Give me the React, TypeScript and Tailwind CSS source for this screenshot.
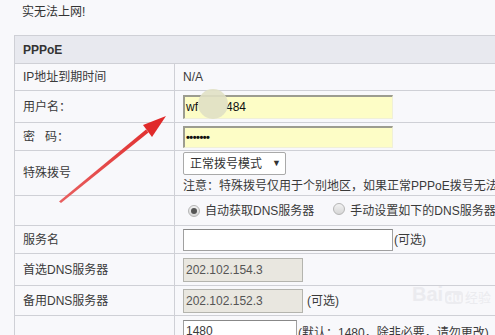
import React from 'react';

const font = { fontFamily: '"Liberation Sans", "Noto Sans CJK SC", sans-serif' };

const Label: React.FC<{ children?: React.ReactNode }> = ({ children }) => (
    <div className="w-[160px] shrink-0 border-r border-[#cfd0d6] pl-[8px] flex items-center">{children}</div>
);

const Radio: React.FC<{ checked?: boolean }> = ({ checked }) => (
    <span className="inline-flex items-center justify-center size-[12px] rounded-full border border-[#b5b5b5] bg-gradient-to-b from-[#f2f2f2] to-[#d6d6d6]">
        {checked && <span className="size-[6px] rounded-full bg-[#555]"></span>}
    </span>
);

export default function App() {
    return (
        <div className="relative w-[495px] h-[335px] overflow-hidden bg-[#f8f8fb] text-[12px] text-[#3a3a3a]" style={font}>
            {/* top message */}
            <div className="h-[35px] pl-[22px] pt-[4px] leading-[16px] text-[#333]">实无法上网!</div>

            {/* PPPoE settings table */}
            <div className="ml-[14px] w-[640px] border-t border-l border-[#cfd0d6]">
                <div className="h-[28px] border-b border-[#cfd0d6] bg-[#e8e9ef] pl-[8px] flex items-center font-bold text-[#333]">PPPoE</div>

                <div className="h-[27px] border-b border-[#cfd0d6] flex">
                    <Label>IP地址到期时间</Label>
                    <div className="pl-[8px] flex items-center">N/A</div>
                </div>

                <div className="h-[32px] border-b border-[#cfd0d6] flex">
                    <Label>用户名：</Label>
                    <div className="pl-[8px] flex items-center">
                        <div className="w-[210px] h-[24px] bg-[#fdfdc6] border-t-2 border-l-2 border-t-[#9c9c90] border-l-[#9c9c90] border-r border-b border-r-[#f0f0d8] border-b-[#f0f0d8] pl-[1px] flex items-center text-[#111]">wf<span className="w-[28px]"></span>484</div>
                    </div>
                </div>

                <div className="h-[28px] border-b border-[#cfd0d6] flex">
                    <Label>密&nbsp;&nbsp;&nbsp;码：</Label>
                    <div className="pl-[8px] flex items-center">
                        <div className="w-[210px] h-[22px] bg-[#fdfdc6] border-t-2 border-l-2 border-t-[#9c9c90] border-l-[#9c9c90] border-r border-b border-r-[#f0f0d8] border-b-[#f0f0d8] pl-[1px] flex items-center text-[#111] text-[11px] font-bold tracking-[-0.5px]">•••••••</div>
                    </div>
                </div>

                <div className="h-[45px] border-b border-[#cfd0d6] flex">
                    <Label>特殊拨号</Label>
                    <div className="pl-[8px] pt-[1px] flex flex-col whitespace-nowrap">
                        <div className="w-[103px] h-[23px] bg-white border border-[#a9a9a9] rounded-[2px] pl-[6px] flex items-center text-[#333]">
                            正常拨号模式<span className="ml-[10px] text-[9px]">▼</span>
                        </div>
                        <div className="mt-[3px] leading-[16px]">注意：特殊拨号仅用于个别地区，如果正常PPPoE拨号无法成功，请尝试</div>
                    </div>
                </div>

                <div className="h-[30px] border-b border-[#cfd0d6] flex">
                    <Label></Label>
                    <div className="pl-[13px] flex items-center gap-[5px] whitespace-nowrap">
                        <Radio checked />
                        <span>自动获取DNS服务器</span>
                        <span className="ml-[14px]"><Radio /></span>
                        <span>手动设置如下的DNS服务器</span>
                    </div>
                </div>

                <div className="h-[28px] border-b border-[#cfd0d6] flex">
                    <Label>服务名</Label>
                    <div className="pl-[8px] flex items-center">
                        <div className="w-[210px] h-[22px] bg-white border border-[#a0a0a0] border-t-[#888]"></div>
                        <span className="ml-[1px]">(可选)</span>
                    </div>
                </div>

                <div className="h-[32px] border-b border-[#cfd0d6] flex">
                    <Label>首选DNS服务器</Label>
                    <div className="pl-[8px] flex items-center">
                        <div className="w-[120px] h-[24px] bg-[#e9e7e0] border border-[#b4b4ae] pl-[2px] flex items-center text-[#555]">202.102.154.3</div>
                    </div>
                </div>

                <div className="h-[30px] border-b border-[#cfd0d6] flex">
                    <Label>备用DNS服务器</Label>
                    <div className="pl-[8px] flex items-center">
                        <div className="w-[120px] h-[24px] bg-[#e9e7e0] border border-[#b4b4ae] pl-[2px] flex items-center text-[#555]">202.102.152.3</div>
                        <span className="ml-[4px]">(可选)</span>
                    </div>
                </div>

                <div className="h-[30px] border-b border-[#cfd0d6] flex">
                    <Label></Label>
                    <div className="pl-[8px] pt-[4px] flex items-start whitespace-nowrap">
                        <div className="w-[114px] h-[22px] bg-white border border-[#a0a0a0] border-t-[#888] pl-[2px] flex items-center">1480</div>
                        <span className="ml-[1px] mt-[4px]">(默认：1480，除非必要，请勿更改)</span>
                    </div>
                </div>
            </div>

            {/* blur patch over username */}
            <div className="absolute left-[198px] top-[89px] size-[30px] rounded-full bg-[#e0e0c4] opacity-90"></div>

            {/* watermark */}
            <div className="absolute left-[412px] top-[284px] flex items-end gap-[2px] text-[#ebebef] pointer-events-none">
                <span className="text-[20px] font-bold leading-none" style={{ fontFamily: '"Liberation Sans", sans-serif' }}>Bai</span>
                <span className="text-[13px] font-bold leading-none bg-[#ececf0] text-[#f8f8fb] rounded-[4px] px-[1px]">du</span>
                <span className="text-[13px] leading-none">经验</span>
            </div>

            {/* red arrow */}
            <svg className="absolute left-0 top-0 pointer-events-none" width="495" height="335" viewBox="0 0 495 335">
                <defs>
                    <linearGradient id="arrowRed" x1="60" y1="202" x2="165" y2="117" gradientUnits="userSpaceOnUse">
                        <stop offset="0" stopColor="#e86060" />
                        <stop offset="1" stopColor="#e02a2a" />
                    </linearGradient>
                </defs>
                <polygon points="59,201.5 61,203 148.5,132.5 146,129.5" fill="url(#arrowRed)" />
                <polygon points="166,116 152,137 143,125" fill="#e02a2a" />
            </svg>
        </div>
    );
}
